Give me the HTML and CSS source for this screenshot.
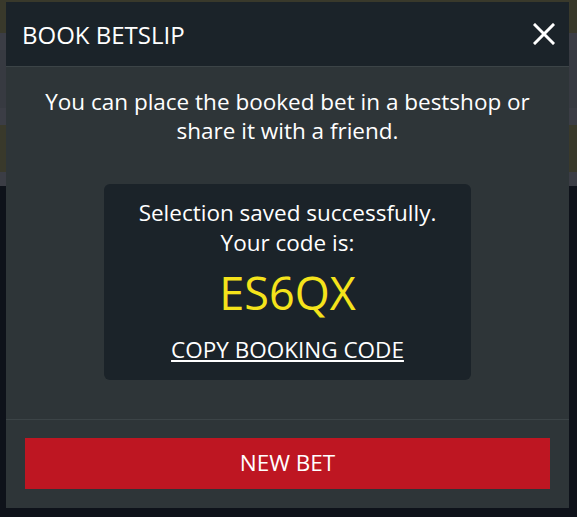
FILE: index.html
```html
<!DOCTYPE html>
<html lang="en">
<head>
    <meta charset="UTF-8">
    <meta name="viewport" content="width=device-width, initial-scale=1.0">
    <title>Book Betslip</title>
    <link rel="stylesheet" href="styles.css">
</head>
<body>
    <div class="backdrop">
        <div class="band band-olive" style="height: 33px"></div>
        <div class="band band-gray" style="height: 17px"></div>
        <div class="band band-slate" style="height: 58px"></div>
        <div class="band band-gray" style="height: 17px"></div>
        <div class="band band-olive" style="height: 47px"></div>
        <div class="band band-gray" style="height: 14px"></div>
    </div>

    <div class="modal">
        <header class="modal-header">
            <h1>BOOK BETSLIP</h1>
            <button class="close" aria-label="Close">
                <svg width="22" height="22" viewBox="0 0 22 22">
                    <path d="M2 2 L20 20 M20 2 L2 20" stroke="#fff" stroke-width="3" stroke-linecap="square" fill="none"/>
                </svg>
            </button>
        </header>

        <div class="modal-body">
            <p class="intro">You can place the booked bet in a bestshop or share it with a friend.</p>

            <div class="code-box">
                <p class="saved">Selection saved successfully.<br>Your code is:</p>
                <div class="code">ES6QX</div>
                <a href="#" class="copy">COPY BOOKING CODE</a>
            </div>
        </div>

        <footer class="modal-footer">
            <button class="new-bet">NEW BET</button>
        </footer>
    </div>
</body>
</html>
```

FILE: styles.css
```css
body {
    font-family: "Open Sans", Arial, sans-serif;
    margin: 0;
    padding: 0;
    background-color: #0e121a;
    color: #fff;
    height: 517px;
    overflow: hidden;
}

.backdrop {
    display: flex;
    flex-direction: column;
}

.band-olive {
    background-color: #39392b;
}

.band-gray {
    background-color: #3b3d45;
}

.band-slate {
    background-color: #373a41;
}

.modal {
    position: absolute;
    left: 6px;
    top: 2px;
    width: 563px;
    height: 506px;
    background-color: #2e3538;
    display: flex;
    flex-direction: column;
}

.modal-header {
    height: 64px;
    background-color: #1b2329;
    border-bottom: 1px solid #3c4447;
    display: flex;
    align-items: center;
    justify-content: space-between;
    padding: 0 14px 0 16px;
}

.modal-header h1 {
    margin: 0;
    font-size: 24px;
    font-weight: normal;
}

.close {
    background: none;
    border: none;
    padding: 0;
    cursor: pointer;
    display: flex;
}

.modal-body {
    flex: 1;
    padding-top: 20px;
    display: flex;
    flex-direction: column;
    align-items: center;
    border-bottom: 1px solid #3c4447;
}

.intro {
    margin: 0;
    width: 520px;
    text-align: center;
    font-size: 22.5px;
    line-height: 29px;
}

.code-box {
    margin-top: 39px;
    width: 367px;
    height: 196px;
    box-sizing: border-box;
    background-color: #1b2329;
    border-radius: 6px;
    text-align: center;
    padding-top: 14px;
}

.saved {
    margin: 0;
    font-size: 22.5px;
    line-height: 30px;
}

.code {
    color: #f5e31b;
    font-size: 45px;
    line-height: 54px;
    margin-top: 8px;
}

.copy {
    display: inline-block;
    margin-top: 15px;
    color: #fff;
    font-size: 22.5px;
    line-height: 30px;
    text-decoration: underline;
    text-decoration-thickness: 2px;
    text-underline-offset: 2px;
}

.modal-footer {
    padding: 18px 19px 19px;
}

.new-bet {
    display: block;
    width: 100%;
    height: 51px;
    padding: 0 0 2px;
    background-color: #be1622;
    color: #fff;
    border: none;
    font-family: inherit;
    font-size: 22.5px;
    cursor: pointer;
}
```
